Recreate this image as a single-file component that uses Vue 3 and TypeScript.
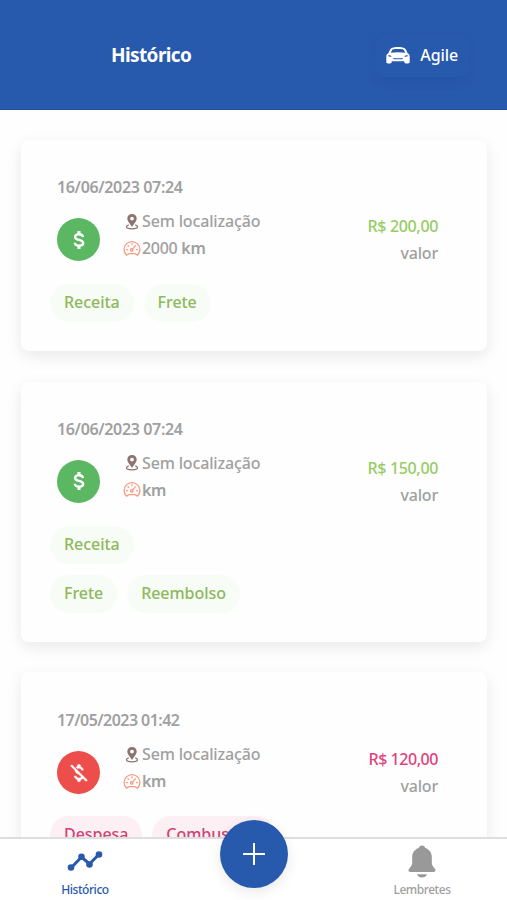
<script setup lang="ts">
interface Entry {
  date: string
  km: string
  value: string
  kind: 'income' | 'expense'
  rows: string[][]
}

const entries: Entry[] = [
  { date: '16/06/2023 07:24', km: '2000', value: 'R$ 200,00', kind: 'income', rows: [['Receita', 'Frete']] },
  { date: '16/06/2023 07:24', km: '', value: 'R$ 150,00', kind: 'income', rows: [['Receita'], ['Frete', 'Reembolso']] },
  { date: '17/05/2023 01:42', km: '', value: 'R$ 120,00', kind: 'expense', rows: [['Despesa', 'Combustível']] },
]
</script>

<template>
  <div class="screen">
    <header class="header">
      <h1 class="title">Histórico</h1>
      <button class="vehicle">
        <svg class="car" viewBox="0 0 24 17">
          <path fill="#fff" fill-rule="evenodd" d="M3.800 3C4.600 1.200 5.900.6 7.500.4c3-.4 6-.4 9 0 1.600.2 2.900.8 3.700 2.600l1.300 2.900c1.500.8 2.200 2 2.200 3.700v5.200c0 1.100-.6 1.700-1.700 1.700h-2c-1.100 0-1.700-.6-1.700-1.700v-.6H5.700v.6c0 1.100-.6 1.700-1.700 1.700H2C.9 16.500.3 15.900.3 14.800V9.600C.3 7.900 1 6.700 2.500 5.900zM6 3.300 4.800 5.800c4.800-.7 9.600-.7 14.400 0L18 3.300c-.3-.6-.8-1-1.500-1.100-3-.4-6-.4-9 0C6.800 2.300 6.300 2.700 6 3.300zM2.300 8.300c1.300-.2 2.700.2 3.400 1.200-1.200.3-2.800.2-3.400-.3zm19.400 0c-1.300-.2-2.700.2-3.400 1.200 1.200.3 2.800.2 3.400-.3zM7.100 10.900c.2.900.8 1.300 1.600 1.300h6.600c.8 0 1.400-.4 1.600-1.300-3.200.6-6.600.6-9.800 0z" />
        </svg>
        <span>Agile</span>
      </button>
    </header>

    <main class="list">
      <article v-for="(entry, i) in entries" :key="i" class="card" :class="entry.kind">
        <div class="date">{{ entry.date }}</div>
        <div class="details">
          <div class="badge">
            <svg viewBox="0 0 24 24">
              <g v-if="entry.kind === 'income'" fill="none" stroke="#fff" stroke-width="2.600">
                <path d="M16.400 8.800C16.100 6.900 14.600 5.700 12 5.700S7.700 6.900 7.700 8.600c0 4.400 8.900 2.200 8.900 6.800 0 1.800-1.800 2.900-4.500 2.900-2.800 0-4.500-1.200-4.700-3.300" />
                <path stroke-width="3.400" d="M12 2.200v3.300M12 18.500v3.300" />
              </g>
              <path v-else fill="#fff" stroke="#fff" stroke-width=".4" d="M4.300 2.900 2.800 4.400 7.500 9.100c.1 2.200 1.700 3.400 4.100 4.200l3 3c-.4.600-1.200 1.100-2.600 1.100-2 0-2.900-.9-3-2.100H6.700c.2 2.200 1.800 3.400 3.500 3.800v1.200c0 .7.5 1.200 1.200 1.200h1.200c.7 0 1.200-.5 1.200-1.200v-1.200c1-.2 1.900-.6 2.500-1.200l3.400 3.400 1.500-1.500zM12.100 6.800c1.700 0 2.400.8 2.500 2.100h2.200c-.1-1.700-1.100-3.300-3.100-3.800V4c0-.7-.5-1.200-1.200-1.200h-1.200c-.7 0-1.200.5-1.200 1.200v1.100c-.5.1-1 .3-1.400.5l1.600 1.600c.5-.2 1.100-.4 1.800-.4z" />
            </svg>
          </div>
          <div class="facts">
            <div class="fact">
              <svg class="pin" viewBox="0 0 16 18">
                <path fill="#8d746e" fill-rule="evenodd" d="M8 1C5.200 1 3.300 3 3.300 5.500 3.300 8.400 6 10.600 8 14c2-3.400 4.700-5.600 4.700-8.500C12.700 3 10.800 1 8 1zm0 2.700a1.900 1.900 0 1 1 0 3.800 1.900 1.900 0 0 1 0-3.800z" />
                <path fill="none" stroke="#8d746e" stroke-width="1.300" d="M4.800 11.800C3 12.200 2.500 12.900 2.500 13.700c0 1.300 2.400 2.100 5.500 2.100s5.500-.8 5.500-2.100c0-.8-.5-1.500-2.300-1.900" />
              </svg>
              <span class="place">Sem localização</span>
            </div>
            <div class="fact">
              <svg class="gauge" viewBox="0 0 18 18">
                <g fill="none" stroke="#fa9a82" stroke-width="1.300" stroke-linecap="round" stroke-linejoin="round">
                  <path d="M3.600 15.200C2 13.700 1.100 11.700 1.100 9.500a7.900 7.900 0 0 1 15.800 0c0 2.200-.9 4.200-2.500 5.700l-2.200-1.500H5.800z" />
                  <path d="m12.500 5.700-3 3.500M9 3.700v1M5 5.700l.7.700M3.500 9.600h1M13.500 9.600h1" />
                  <circle cx="8.700" cy="9.900" r="1.200" />
                </g>
              </svg>
              <span class="distance">{{ entry.km ? entry.km + ' ' : '' }}<b>km</b></span>
            </div>
          </div>
          <div class="amount">
            <div class="value">{{ entry.value }}</div>
            <div class="caption">valor</div>
          </div>
        </div>
        <div class="tags">
          <div v-for="(row, r) in entry.rows" :key="r" class="tag-row">
            <span v-for="tag in row" :key="tag" class="tag">{{ tag }}</span>
          </div>
        </div>
      </article>
    </main>

    <nav class="nav">
      <a class="tab active">
        <svg class="trend" viewBox="0 0 36 22">
          <path d="M4 18 14.500 7 22.500 14 32 4.200" fill="none" stroke="#2759ad" stroke-width="3" />
          <g fill="#2759ad"><circle cx="4" cy="17.500" r="3.300" /><circle cx="14.500" cy="6.800" r="3.300" /><circle cx="22.500" cy="14.500" r="3.300" /><circle cx="32" cy="4.500" r="3.300" /></g>
        </svg>
        <span>Histórico</span>
      </a>
      <button class="add">
        <svg viewBox="0 0 22 22"><path d="M11 .8v20.400M.8 11h20.400" stroke="#fff" stroke-width="2" stroke-linecap="round" /></svg>
      </button>
      <a class="tab">
        <svg class="bell" viewBox="0 0 28 33">
          <path fill="#999" d="M14 .5c-1.700 0-2.900.9-3.300 2.400C6.500 4.300 4.200 7.800 4.200 12v5.200c0 2-.6 3.600-1.900 5.100L1 23.900c-1.200 1.500-.4 3.100 1.500 3.100h23c1.900 0 2.700-1.600 1.500-3.100l-1.300-1.600c-1.300-1.500-1.900-3.100-1.900-5.100V12c0-4.200-2.300-7.700-6.500-9.100C16.900 1.400 15.700.5 14 .5zM9 29.200c.7 2 2.600 3.300 5 3.300s4.300-1.300 5-3.300z" />
        </svg>
        <span>Lembretes</span>
      </a>
    </nav>
  </div>
</template>

<style>
body {
  background: #fff;
}
</style>

<style scoped>
.screen {
  position: relative;
  display: flex;
  flex-direction: column;
  height: 900px;
  overflow: hidden;
  background: #fefefe;
  color: #a0a0a0;
  font-family: "Noto Sans", "Open Sans", sans-serif;
  font-size: 16px;
  font-weight: 500;
  line-height: 27px;
}
button {
  border: 0;
  padding: 0;
  font: inherit;
}
svg {
  display: block;
  flex: none;
}
.header {
  display: flex;
  justify-content: space-between;
  align-items: center;
  box-sizing: border-box;
  height: 109.500px;
  flex: none;
  padding: 3px 39px 0 111px;
  background: #2759ad;
  border-bottom: 1px solid #1d4d9e;
  color: #fff;
}
.title {
  margin: 0;
  font-size: 19px;
  font-weight: 700;
  letter-spacing: -0.6px;
}
.vehicle {
  display: flex;
  align-items: center;
  gap: 10px;
  height: 42px;
  padding: 0 10px;
  border-radius: 8px;
  background: #2759ad;
  box-shadow: 0 5px 9px rgba(25, 75, 145, 0.2);
  color: #fff;
  letter-spacing: -0.1px;
}
.car {
  width: 24px;
  height: 17px;
}
.list {
  display: flex;
  flex-direction: column;
  gap: 30.500px;
  flex: 1;
  min-height: 0;
  padding: 30.500px 20px 0 21px;
}
.card {
  flex: none;
  box-sizing: border-box;
  padding: 34px 49px 29px 29px;
  border-radius: 8px;
  background: #fefefe;
  box-shadow: 0 5px 16px rgba(0, 0, 0, 0.085);
}
.card:last-child {
  padding-top: 35px;
}
.date {
  padding-left: 7px;
  font-weight: 600;
  letter-spacing: -0.35px;
}
.expense .date {
  letter-spacing: -0.55px;
}
.details {
  display: flex;
  padding: 7px 0 0 7px;
}
.badge {
  display: grid;
  place-items: center;
  width: 43px;
  height: 43px;
  margin-top: 10px;
  border-radius: 50%;
  background: #5cb762;
}
.badge svg {
  width: 22px;
  height: 22px;
}
.expense .badge {
  background: #ee4e4b;
}
.facts {
  flex: 1;
  padding-left: 23px;
}
.fact {
  display: flex;
  align-items: center;
  height: 27px;
}
.place {
  letter-spacing: -0.15px;
}
.pin {
  width: 16px;
  height: 18px;
  margin: 0 2px 0 1px;
}
.gauge {
  width: 18px;
  height: 18px;
  margin-right: 1px;
}
.distance {
  white-space: pre;
  letter-spacing: -0.3px;
}
.distance b {
  font-weight: 600;
}
.amount {
  padding-top: 5px;
  text-align: right;
}
.value {
  color: #97cc63;
  letter-spacing: -0.35px;
}
.expense .value {
  color: #df427c;
  letter-spacing: -0.45px;
}
.caption {
  letter-spacing: -0.2px;
}
.tags {
  display: flex;
  flex-direction: column;
  gap: 11px;
  padding-top: 17px;
}
.card:last-child .tags {
  padding-top: 16px;
}
.tag-row {
  display: flex;
  gap: 10px;
}
.tag {
  height: 38px;
  padding: 0 14px;
  border-radius: 19px;
  background: #f8fcf6;
  color: #8db85c;
  letter-spacing: -0.05px;
  line-height: 37px;
}
.expense .tag {
  background: #fdf0f4;
  color: #d04273;
}
.nav {
  position: absolute;
  inset: auto 0 0;
  display: flex;
  justify-content: space-between;
  box-sizing: border-box;
  height: 63px;
  border-top: 2px solid #dedede;
  background: #fff;
}
.tab {
  display: flex;
  flex-direction: column;
  align-items: center;
  width: 170px;
  font-size: 12px;
  line-height: 18px;
  letter-spacing: -0.45px;
}
.active {
  color: #2759ad;
}
.trend {
  width: 36px;
  height: 22px;
  margin: 11px 0 9px;
}
.bell {
  width: 28px;
  height: 33px;
  margin: 6px 0 3px;
}
.add {
  display: grid;
  place-items: center;
  width: 68px;
  height: 68px;
  margin-top: -19.500px;
  border-radius: 50%;
  background: #2759ad;
  box-shadow: 0 4px 14px rgba(0, 0, 0, 0.09);
}
.add svg {
  width: 22px;
  height: 22px;
}
</style>
